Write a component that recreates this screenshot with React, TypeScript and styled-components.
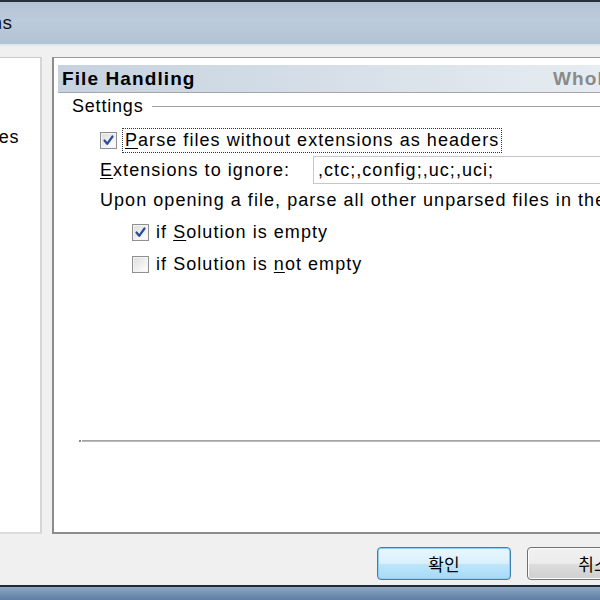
import React from "react";
import styled, { createGlobalStyle } from "styled-components";

const Global = createGlobalStyle`
  html, body { margin: 0; padding: 0; background: #f0f0f0; }
  body { font-family: "Liberation Sans", Arial, "Noto Sans CJK KR", sans-serif; }
`;

const Window = styled.div`
  width: 600px;
  height: 600px;
  overflow: hidden;
  display: flex;
  flex-direction: column;
  background: #f0f0f0;
  color: #000;
  font-size: 18px;
`;

const TitleBar = styled.div`
  height: 46px;
  box-sizing: border-box;
  border-top: 2px solid #27313c;
  border-bottom: 2px solid #dfe6ee;
  background: linear-gradient(180deg, #b3c4d6 0%, #bccbdb 45%, #b2c3d4 100%);
  display: flex;
  align-items: center;
  overflow: hidden;
`;

const TitleText = styled.span`
  margin-left: -57px;
  font-size: 19px;
  letter-spacing: 0.6px;
  color: #111;
  white-space: nowrap;
`;

const Main = styled.div`
  display: flex;
  gap: 10px;
  padding-top: 11px;
  height: 477px;
  box-sizing: content-box;
`;

const TreePanel = styled.div`
  width: 42px;
  box-sizing: border-box;
  background: #fff;
  border-top: 1px solid #c8c8c8;
  border-right: 2px solid #d6d6d6;
  border-bottom: 2px solid #dcdcdc;
  overflow: hidden;
  padding-top: 69px;
`;

const TreeItem = styled.div`
  white-space: nowrap;
  margin-left: -23px;
  font-size: 18px;
  letter-spacing: 0.9px;
  line-height: 20px;
`;

const PagePanel = styled.div`
  flex: 1;
  box-sizing: border-box;
  background: #fff;
  border-top: 1px solid #9a9a9a;
  border-left: 2px solid #8c8c8c;
  border-bottom: 2px solid #8c8c8c;
  padding: 7px 0 0 4px;
  display: flex;
  flex-direction: column;
  overflow: hidden;
`;

const PageHeader = styled.div`
  height: 27px;
  display: flex;
  align-items: center;
  background: linear-gradient(90deg, #c6d2df 0%, #d6dfe8 50%, #e6ecf1 100%);
  border-bottom: 1px solid #a6a6a6;
  font-weight: bold;
  font-size: 19px;
  letter-spacing: 1.1px;
  padding-left: 4px;
  white-space: nowrap;
  overflow: hidden;
`;

const HeaderTitle = styled.span`
  width: 491px;
  flex-shrink: 0;
`;

const HeaderNote = styled.span`
  color: #8a8a8a;
  flex-shrink: 0;
`;

const GroupTitle = styled.div`
  display: flex;
  align-items: center;
  gap: 9px;
  margin: 2px 0 0 14px;
  height: 22px;
  letter-spacing: 0.8px;
  white-space: nowrap;
`;

const GroupLine = styled.div`
  flex: 1;
  height: 1px;
  background: #a0a0a0;
`;

const Options = styled.div`
  display: flex;
  flex-direction: column;
  padding-left: 42px;
  margin-top: 7px;
  letter-spacing: 1.05px;
`;

const CheckRow = styled.label<{ $indent?: number }>`
  display: flex;
  align-items: center;
  gap: 7px;
  height: 32px;
  margin-left: ${(p) => p.$indent ?? 0}px;
  white-space: nowrap;
`;

const Box = styled.span`
  width: 15px;
  height: 15px;
  border: 1px solid #8e8f8f;
  background: linear-gradient(135deg, #dcdcdc 0%, #f6f6f6 70%, #ffffff 100%);
  box-shadow: inset 0 0 0 1px #f4f4f4;
  display: flex;
  align-items: center;
  justify-content: center;
  flex-shrink: 0;
`;

const Focus = styled.span`
  outline: 1px dotted #333;
  outline-offset: 1px;
  padding: 0 1px;
`;

const U = styled.span`
  text-decoration: underline;
  text-underline-offset: 2px;
`;

const FieldRow = styled.div`
  display: flex;
  align-items: center;
  height: 28px;
  white-space: nowrap;
`;

const FieldLabel = styled.span`
  width: 213px;
  flex-shrink: 0;
`;

const TextInput = styled.div`
  flex: 1;
  height: 28px;
  box-sizing: border-box;
  border: 1px solid #c5c7cc;
  border-right: none;
  padding: 3px 0 0 4px;
  overflow: hidden;
  white-space: nowrap;
`;

const Paragraph = styled.div`
  height: 32px;
  display: flex;
  align-items: center;
  white-space: nowrap;
`;

const Spacer = styled.div`
  height: 160px;
`;

const Divider = styled.div`
  margin-left: 21px;
  height: 2px;
  display: flex;
  align-items: center;
  gap: 1px;
`;

const DividerDot = styled.span`
  width: 2px;
  height: 2px;
  background: #8a8a8a;
`;

const DividerLine = styled.span`
  flex: 1;
  height: 2px;
  background: linear-gradient(180deg, #9a9a9a 0%, #c4c4c4 100%);
`;

const Footer = styled.div`
  height: 51px;
  display: flex;
  align-items: flex-start;
  padding: 13px 0 0 377px;
  gap: 16px;
  box-sizing: border-box;
`;

const Button = styled.button<{ $default?: boolean }>`
  width: 134px;
  height: 33px;
  flex-shrink: 0;
  border-radius: 4px;
  font-family: "Noto Sans CJK KR", sans-serif;
  font-size: 17px;
  color: #000;
  padding: 0;
  border: 1px solid ${(p) => (p.$default ? "#3c7fb1" : "#707070")};
  background: ${(p) =>
    p.$default
      ? "linear-gradient(180deg, #eaf6fd 0%, #d9f0fc 50%, #bee6fd 51%, #a7d9f5 100%)"
      : "linear-gradient(180deg, #f2f2f2 0%, #ebebeb 50%, #dddddd 51%, #cfcfcf 100%)"};
  box-shadow: ${(p) => (p.$default ? "inset 0 0 0 1px #8fd0f0" : "inset 0 0 0 1px #fcfcfc")};
`;

const BottomFrame = styled.div`
  height: 15px;
  box-sizing: border-box;
  border-top: 2px solid #1f2a36;
  background: linear-gradient(180deg, #8fa9c4 0%, #6f8db0 60%, #5f7ea2 100%);
`;

const Check = () => (
  <svg width="13" height="13" viewBox="0 0 13 13">
    <path d="M2.5 6.5 L5.2 9.8 L10.5 2.5" fill="none" stroke="#2b4a9a" strokeWidth="2.2" strokeLinecap="round" strokeLinejoin="round" />
  </svg>
);

export default function App() {
  return (
    <>
      <Global />
      <Window>
        <TitleBar>
          <TitleText>Options</TitleText>
        </TitleBar>
        <Main>
          <TreePanel>
            <TreeItem>Files</TreeItem>
          </TreePanel>
          <PagePanel>
            <PageHeader>
              <HeaderTitle>File Handling</HeaderTitle>
              <HeaderNote>Whole Tomato</HeaderNote>
            </PageHeader>
            <GroupTitle>
              <span>Settings</span>
              <GroupLine />
            </GroupTitle>
            <Options>
              <CheckRow>
                <Box>
                  <Check />
                </Box>
                <Focus>
                  <U>P</U>arse files without extensions as headers
                </Focus>
              </CheckRow>
              <FieldRow>
                <FieldLabel>
                  <U>E</U>xtensions to ignore:
                </FieldLabel>
                <TextInput>,ctc;,config;,uc;,uci;</TextInput>
              </FieldRow>
              <Paragraph>Upon opening a file, parse all other unparsed files in the Solution</Paragraph>
              <CheckRow $indent={32}>
                <Box>
                  <Check />
                </Box>
                <span>
                  if <U>S</U>olution is empty
                </span>
              </CheckRow>
              <CheckRow $indent={32}>
                <Box />
                <span>
                  if Solution is <U>n</U>ot empty
                </span>
              </CheckRow>
            </Options>
            <Spacer />
            <Divider>
              <DividerDot />
              <DividerLine />
            </Divider>
          </PagePanel>
        </Main>
        <Footer>
          <Button $default>확인</Button>
          <Button>취소</Button>
        </Footer>
        <BottomFrame />
      </Window>
    </>
  );
}
